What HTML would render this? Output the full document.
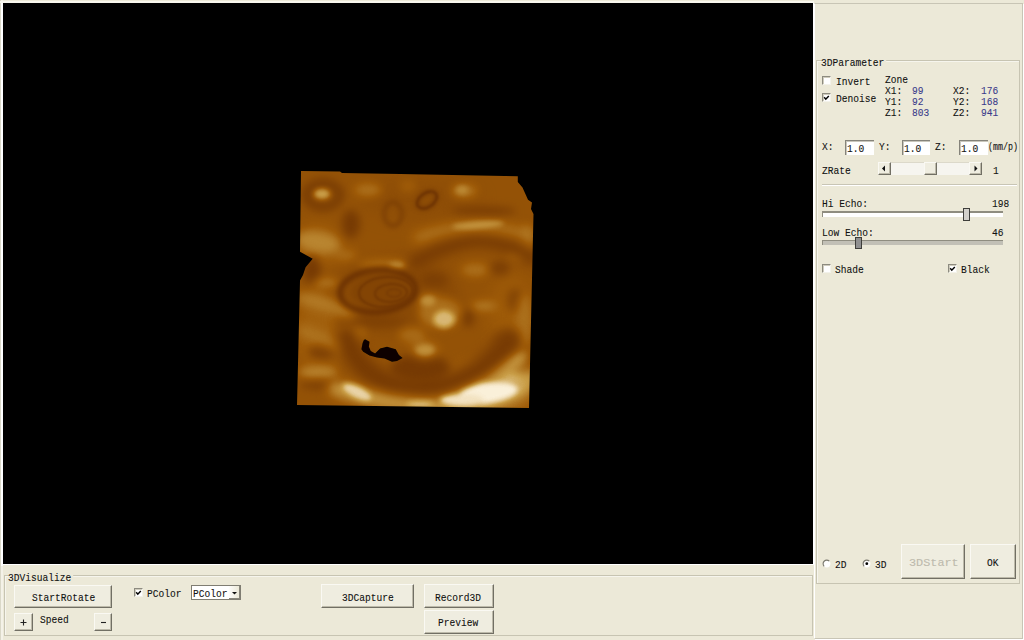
<!DOCTYPE html>
<html><head><meta charset="utf-8">
<style>
html,body{margin:0;padding:0;width:1024px;height:640px;overflow:hidden;background:#ECE9D8;position:relative}
.a{position:absolute;box-sizing:border-box}
.t{position:absolute;font-family:"Liberation Mono",monospace;font-size:11.6px;line-height:11px;white-space:pre;color:#111;-webkit-text-stroke:0.1px currentColor;transform-origin:0 0;transform:scaleX(0.825)}
.btn{position:absolute;box-sizing:border-box;background:#EFEDE0;border-top:1px solid #FAF9F3;border-left:1px solid #FAF9F3;border-right:1px solid #716F64;border-bottom:1px solid #716F64;box-shadow:inset -1px -1px 0 #BDBAAA}
.ed{position:absolute;box-sizing:border-box;height:15px;background:#fff;border-top:1px solid #85837A;border-left:1px solid #85837A;box-shadow:inset 1px 1px 0 #C9C7BC}
.gb{position:absolute;box-sizing:border-box;border:1px solid #C7C4B2;box-shadow:inset 1px 1px 0 rgba(255,255,255,0.55)}
.cb{position:absolute;box-sizing:border-box;width:9px;height:9px;background:#FFFFFF;border-top:1px solid #8D8B80;border-left:1px solid #8D8B80;border-right:1px solid #F3F2EA;border-bottom:1px solid #F3F2EA;box-shadow:inset 1px 1px 0 #CFCCBD}
.ttl{background:#ECE9D8}
.blue{color:#3A3A8A}
</style></head><body>
<!-- left outer highlight -->
<div class="a" style="left:0;top:0;width:3px;height:640px;background:#F4F2E8"></div>
<div class="a" style="left:0;top:0;width:1px;height:640px;background:#DAD8C8"></div>
<div class="a" style="left:1px;top:2px;width:2px;height:564px;background:#FFFFFF"></div>
<div class="a" style="left:0;top:1px;width:814px;height:2px;background:#F8F7EE"></div>
<!-- black view -->
<div class="a" style="left:3px;top:3px;width:810px;height:561px;background:#000"></div>
<div class="a" style="left:3px;top:564px;width:811px;height:1px;background:#FFFFFF"></div>
<div class="a" style="left:813px;top:3px;width:1px;height:562px;background:#FFFFFF"></div>

<!-- ultrasound image -->
<svg class="a" style="left:0;top:0" width="1024" height="640" viewBox="0 0 1024 640">
<defs>
<clipPath id="cp"><path d="M301,171 L340,171.5 L342,173 L400,174 L517.8,176.2 L517.8,182 L522.5,187.5 L528,199.7 L532,202.5 L531,209 L533.5,214 L529,408 L297,405 L300,280.6 L303,275 L305.6,267.3 L312.7,258.8 L300,251.7 Z"/></clipPath>
<filter id="b10" x="-50%" y="-50%" width="200%" height="200%" color-interpolation-filters="sRGB"><feGaussianBlur stdDeviation="8"/></filter>
<filter id="b5" x="-50%" y="-50%" width="200%" height="200%" color-interpolation-filters="sRGB"><feGaussianBlur stdDeviation="4"/></filter>
<filter id="b6" x="-50%" y="-50%" width="200%" height="200%" color-interpolation-filters="sRGB"><feGaussianBlur stdDeviation="6"/></filter>
<filter id="b15" x="-50%" y="-50%" width="200%" height="200%" color-interpolation-filters="sRGB"><feGaussianBlur stdDeviation="1.3"/></filter>
<filter id="b2" x="-50%" y="-50%" width="200%" height="200%" color-interpolation-filters="sRGB"><feGaussianBlur stdDeviation="2.5"/></filter>
<filter id="b05" x="-50%" y="-50%" width="200%" height="200%"><feGaussianBlur stdDeviation="0.6"/></filter>
<filter id="sep" x="0" y="0" width="100%" height="100%" color-interpolation-filters="sRGB"><feComponentTransfer>
<feFuncR type="table" tableValues="0.08 0.43 0.62 0.79 1.0"/>
<feFuncG type="table" tableValues="0.02 0.2 0.355 0.62 0.97"/>
<feFuncB type="table" tableValues="0 0.01 0.03 0.28 0.9"/>
</feComponentTransfer></filter>
</defs>
<g clip-path="url(#cp)">
<g filter="url(#sep)">
<rect x="280" y="150" width="270" height="280" fill="#737373"/>
<g filter="url(#b10)"><ellipse cx="395" cy="295" rx="65" ry="38" fill="#666666"/><ellipse cx="488" cy="388" rx="48" ry="25" fill="#a3a3a3"/><ellipse cx="318" cy="245" rx="22" ry="18" fill="#8c8c8c"/><ellipse cx="318" cy="330" rx="22" ry="40" fill="#858585"/><ellipse cx="512" cy="315" rx="22" ry="40" fill="#808080"/><ellipse cx="420" cy="200" rx="60" ry="20" fill="#6b6b6b"/></g>
<g filter="url(#b5)"><ellipse cx="323" cy="195" rx="17" ry="12" fill="none" stroke="#4c4c4c" stroke-width="8"/><ellipse cx="351" cy="224" rx="9" ry="14" fill="#4c4c4c"/><ellipse cx="368" cy="190" rx="14" ry="7" fill="#949494"/><ellipse cx="464" cy="191" rx="13" ry="7" fill="#999999"/><ellipse cx="484" cy="211" rx="32" ry="5" fill="#525252"/><ellipse cx="527" cy="240" rx="6" ry="16" fill="#949494"/><ellipse cx="408" cy="186" rx="8" ry="6" fill="#858585"/><ellipse cx="318" cy="242" rx="22" ry="10" fill="#a8a8a8" transform="rotate(10 318 242)"/><ellipse cx="345" cy="255" rx="12" ry="6" fill="#8f8f8f"/><ellipse cx="518" cy="253" rx="10" ry="6" fill="#999999"/><ellipse cx="475" cy="270" rx="14" ry="7" fill="#949494"/><ellipse cx="312" cy="270" rx="9" ry="14" fill="#4c4c4c"/><ellipse cx="326" cy="283" rx="13" ry="5" fill="#999999"/><ellipse cx="412" cy="335" rx="14" ry="8" fill="#8f8f8f"/><ellipse cx="388" cy="264" rx="30" ry="5" fill="#949494"/><ellipse cx="434" cy="280" rx="14" ry="8" fill="#545454"/><ellipse cx="322" cy="352" rx="14" ry="8" fill="#575757"/><ellipse cx="318" cy="372" rx="20" ry="6" fill="#a8a8a8"/><ellipse cx="322" cy="385" rx="22" ry="5" fill="#575757"/><ellipse cx="500" cy="268" rx="10" ry="7" fill="#525252"/><ellipse cx="515" cy="300" rx="8" ry="12" fill="#5c5c5c"/><ellipse cx="484" cy="306" rx="13" ry="5" fill="#9e9e9e"/><ellipse cx="468" cy="318" rx="6" ry="9" fill="#4c4c4c"/><ellipse cx="440" cy="313" rx="22" ry="16" fill="#949494"/><ellipse cx="430" cy="303" rx="12" ry="10" fill="#949494"/><ellipse cx="524" cy="320" rx="8" ry="26" fill="#949494"/><ellipse cx="504" cy="340" rx="14" ry="10" fill="#666666"/><ellipse cx="352" cy="332" rx="14" ry="10" fill="#8f8f8f"/><ellipse cx="372" cy="322" rx="36" ry="5" fill="#545454"/><ellipse cx="420" cy="368" rx="30" ry="14" fill="#4c4c4c"/><ellipse cx="425" cy="350" rx="14" ry="9" fill="#949494"/><ellipse cx="490" cy="390" rx="38" ry="14" fill="#dbdbdb" transform="rotate(-12 490 390)"/><ellipse cx="505" cy="368" rx="26" ry="9" fill="#b8b8b8" transform="rotate(-35 505 368)"/></g>
<g filter="url(#b6)"><path d="M418,238 Q470,218 530,236" fill="none" stroke="#9e9e9e" stroke-width="10" stroke-linecap="round"/><path d="M412,264 Q450,242 478,240 Q512,242 532,258" fill="none" stroke="#4c4c4c" stroke-width="14" stroke-linecap="round"/><path d="M300,298 Q325,302 350,314" fill="none" stroke="#adadad" stroke-width="9" stroke-linecap="round"/><path d="M300,330 Q318,336 338,346" fill="none" stroke="#a3a3a3" stroke-width="8" stroke-linecap="round"/><path d="M346,336 Q358,378 405,388 Q470,390 510,340" fill="none" stroke="#4c4c4c" stroke-width="20" stroke-linecap="round"/><path d="M335,388 Q380,404 438,406 Q490,402 532,378" fill="none" stroke="#c2c2c2" stroke-width="14" stroke-linecap="round"/></g>
<g filter="url(#b2)"><ellipse cx="322" cy="194" rx="8" ry="5" fill="#c2c2c2"/><ellipse cx="462" cy="190" rx="6" ry="4" fill="#adadad"/><ellipse cx="478" cy="225" rx="26" ry="3.5" fill="#b8b8b8" transform="rotate(-4 478 225)"/><ellipse cx="397" cy="265" rx="8" ry="3" fill="#adadad"/><ellipse cx="428" cy="301" rx="7" ry="5" fill="#b2b2b2"/><ellipse cx="444" cy="319" rx="11" ry="9" fill="#d1d1d1"/><ellipse cx="425" cy="350" rx="9" ry="5" fill="#b2b2b2"/><ellipse cx="357" cy="392" rx="16" ry="6" fill="#e6e6e6" transform="rotate(25 357 392)"/><ellipse cx="488" cy="393" rx="30" ry="10" fill="#fafafa" transform="rotate(-8 488 393)"/><ellipse cx="462" cy="400" rx="22" ry="6" fill="#f0f0f0"/><ellipse cx="420" cy="404" rx="14" ry="3" fill="#d6d6d6"/><ellipse cx="427" cy="200" rx="11" ry="7" fill="none" stroke="#3d3d3d" stroke-width="2.5" transform="rotate(-35 427 200)"/><ellipse cx="393" cy="214" rx="9" ry="12" fill="none" stroke="#474747" stroke-width="2.5"/><ellipse cx="383" cy="291" rx="32" ry="17" fill="#5c5c5c" transform="rotate(-4 383 291)"/><ellipse cx="378" cy="291" rx="38" ry="21" fill="none" stroke="#383838" stroke-width="5" transform="rotate(-4 378 291)"/></g>
<g filter="url(#b15)"><ellipse cx="386" cy="292" rx="27" ry="15" fill="none" stroke="#454545" stroke-width="2" transform="rotate(-4 386 292)"/><ellipse cx="391" cy="293" rx="16" ry="9" fill="none" stroke="#474747" stroke-width="2" transform="rotate(-4 391 293)"/><ellipse cx="394" cy="293" rx="7" ry="4" fill="none" stroke="#4c4c4c" stroke-width="1.5"/><ellipse cx="427" cy="200" rx="11" ry="7" fill="none" stroke="#3d3d3d" stroke-width="1.8" transform="rotate(-35 427 200)"/></g>
</g>
<path d="M365.1,339.3 L369.5,341.75 L368.9,346.75 L370.75,351.1 L375.1,353.6 L380.1,348.6 L387,346.75 L395.75,349.25 L398.9,354.9 L402.6,358 L397,361.1 L392,361.75 L384.5,358.6 L377,357.4 L369.5,355.5 L363.25,351.75 L361.4,349.25 L362.6,343 L363.9,339.9 Z" fill="#080400" filter="url(#b05)"/>
</g>
</svg>

<!-- bottom group box -->
<div class="gb" style="left:4px;top:575px;width:809px;height:61px"></div>
<div class="t ttl" style="left:8px;top:572px;padding-right:2px">3DVisualize</div>
<div class="btn" style="left:14px;top:585px;width:98px;height:23px"></div>
<div class="t" style="left:32px;top:592px">StartRotate</div>
<div class="btn" style="left:14px;top:613px;width:19px;height:18px"></div>
<svg class="a" style="left:14px;top:613px" width="19" height="18"><path d="M9.5,6.5 V12.5 M6.5,9.5 H12.5" stroke="#222" stroke-width="1.1" fill="none"/></svg>
<div class="t" style="left:40px;top:614px">Speed</div>
<div class="btn" style="left:94px;top:613px;width:18px;height:18px"></div>
<svg class="a" style="left:94px;top:613px" width="18" height="18"><path d="M7,9.5 H12" stroke="#222" stroke-width="1.1" fill="none"/></svg>
<div class="cb" style="left:134px;top:588px"></div>
<svg class="a" style="left:134px;top:588px" width="9" height="9"><path d="M2.2,4.2 L3.8,6.2 L6.8,3" stroke="#000" stroke-width="1.5" fill="none"/></svg>
<div class="t" style="left:147px;top:588px">PColor</div>
<div class="a" style="left:191px;top:585px;width:50px;height:15px;background:#fff;border:1px solid #7F7D72"></div>
<div class="t" style="left:193px;top:588px">PColor</div>
<div class="a" style="left:229px;top:586px;width:11px;height:13px;background:linear-gradient(90deg,#FDFDFB,#ECE9D8);border-right:1px solid #8A887C;border-bottom:1px solid #8A887C"></div>
<svg class="a" style="left:229px;top:586px" width="11" height="13"><path d="M3,6 L8,6 L5.5,8.5 Z" fill="#111"/></svg>
<div class="btn" style="left:321px;top:584px;width:93px;height:24px"></div>
<div class="t" style="left:342px;top:592px">3DCapture</div>
<div class="btn" style="left:424px;top:584px;width:70px;height:24px"></div>
<div class="t" style="left:435px;top:592px">Record3D</div>
<div class="btn" style="left:424px;top:610px;width:70px;height:24px"></div>
<div class="t" style="left:438px;top:617px">Preview</div>

<!-- right panel -->
<div class="a" style="left:814px;top:3px;width:209px;height:636px;border-top:1px solid #C8C5B5;border-left:1px solid #FFFFFF;border-right:1px solid #C8C5B5;border-bottom:1px solid #C8C5B5;box-shadow:1px 1px 0 #FFFFFF"></div>
<div class="gb" style="left:816px;top:60px;width:204px;height:524px"></div>
<div class="t ttl" style="left:821px;top:57px;padding-right:2px">3DParameter</div>
<div class="cb" style="left:822px;top:76px"></div>
<div class="t" style="left:836px;top:76px">Invert</div>
<div class="cb" style="left:822px;top:93px"></div>
<svg class="a" style="left:822px;top:93px" width="9" height="9"><path d="M2.2,4.2 L3.8,6.2 L6.8,3" stroke="#000" stroke-width="1.5" fill="none"/></svg>
<div class="t" style="left:836px;top:93px">Denoise</div>
<div class="t" style="left:885px;top:74px">Zone</div>
<div class="t" style="left:885px;top:85px">X1:</div>
<div class="t blue" style="left:912px;top:85px">99</div>
<div class="t" style="left:953px;top:85px">X2:</div>
<div class="t blue" style="left:981px;top:85px">176</div>
<div class="t" style="left:885px;top:96px">Y1:</div>
<div class="t blue" style="left:912px;top:96px">92</div>
<div class="t" style="left:953px;top:96px">Y2:</div>
<div class="t blue" style="left:981px;top:96px">168</div>
<div class="t" style="left:885px;top:107px">Z1:</div>
<div class="t blue" style="left:912px;top:107px">803</div>
<div class="t" style="left:953px;top:107px">Z2:</div>
<div class="t blue" style="left:981px;top:107px">941</div>

<div class="t" style="left:822px;top:141px">X:</div>
<div class="ed" style="left:845px;top:140px;width:29px"></div>
<div class="t" style="left:847px;top:143px">1.0</div>
<div class="t" style="left:879px;top:141px">Y:</div>
<div class="ed" style="left:902px;top:140px;width:28px"></div>
<div class="t" style="left:904px;top:143px">1.0</div>
<div class="t" style="left:935px;top:141px">Z:</div>
<div class="ed" style="left:959px;top:140px;width:29px"></div>
<div class="t" style="left:961px;top:143px">1.0</div>
<div class="t" style="left:988px;top:141px;transform:scaleX(0.72)">(mm/p)</div>

<div class="t" style="left:822px;top:165px">ZRate</div>
<div class="a" style="left:878px;top:162px;width:104px;height:13px;background:#F6F5EF;border-top:1px solid #DCD9CA"></div>
<div class="btn" style="left:878px;top:162px;width:13px;height:13px"></div>
<svg class="a" style="left:878px;top:162px" width="13" height="13"><path d="M4,6.5 L7,3.5 L7,9.5 Z" fill="#111"/></svg>
<div class="btn" style="left:924px;top:162px;width:13px;height:13px"></div>
<div class="btn" style="left:969px;top:162px;width:13px;height:13px"></div>
<svg class="a" style="left:969px;top:162px" width="13" height="13"><path d="M8.5,6.5 L5.5,3.5 L5.5,9.5 Z" fill="#111"/></svg>
<div class="t" style="left:993px;top:165px">1</div>
<div class="a" style="left:822px;top:184px;width:195px;height:1px;background:#C8C5B5"></div>
<div class="a" style="left:822px;top:185px;width:195px;height:1px;background:#FFFFFF"></div>

<div class="t" style="left:822px;top:198px">Hi Echo:</div>
<div class="t" style="left:992px;top:198px">198</div>
<div class="a" style="left:822px;top:211px;width:181px;height:6px;background:#FFFFFF;border-top:2px solid #8F8D80;border-left:1px solid #8F8D80"></div>
<div class="a" style="left:963px;top:208px;width:7px;height:13px;background:#D2D0CA;border:1px solid #3E3E3A"></div>
<div class="t" style="left:822px;top:227px">Low Echo:</div>
<div class="t" style="left:992px;top:227px">46</div>
<div class="a" style="left:822px;top:240px;width:181px;height:5px;background:#C2C0B6;border-top:1.5px solid #8F8D80;border-left:1px solid #8F8D80"></div>
<div class="a" style="left:855px;top:237px;width:7px;height:12px;background:#909090;border:1px solid #3E3E3A"></div>

<div class="cb" style="left:822px;top:264px"></div>
<div class="t" style="left:835px;top:264px">Shade</div>
<div class="cb" style="left:948px;top:264px"></div>
<svg class="a" style="left:948px;top:264px" width="9" height="9"><path d="M2.2,4.2 L3.8,6.2 L6.8,3" stroke="#000" stroke-width="1.5" fill="none"/></svg>
<div class="t" style="left:961px;top:264px">Black</div>

<svg class="a" style="left:822px;top:559px" width="10" height="10"><circle cx="4.8" cy="4.8" r="3.6" fill="#fff"/><path d="M7.3,2.2 A3.6,3.6 0 1 0 2.2,7.4" stroke="#7A786E" stroke-width="1.1" fill="none"/></svg>
<div class="t" style="left:835px;top:559px">2D</div>
<svg class="a" style="left:862px;top:559px" width="10" height="10"><circle cx="4.8" cy="4.8" r="3.6" fill="#fff"/><path d="M7.3,2.2 A3.6,3.6 0 1 0 2.2,7.4" stroke="#7A786E" stroke-width="1.1" fill="none"/><circle cx="4.8" cy="4.7" r="1.4" fill="#000"/></svg>
<div class="t" style="left:875px;top:559px">3D</div>
<div class="btn" style="left:901px;top:544px;width:64px;height:35px"></div>
<div class="t" style="left:909px;top:557px;color:#BDBAAD;transform:scaleX(1.02)">3DStart</div>
<div class="btn" style="left:970px;top:544px;width:46px;height:35px"></div>
<div class="t" style="left:987px;top:557px">OK</div>
</body></html>
